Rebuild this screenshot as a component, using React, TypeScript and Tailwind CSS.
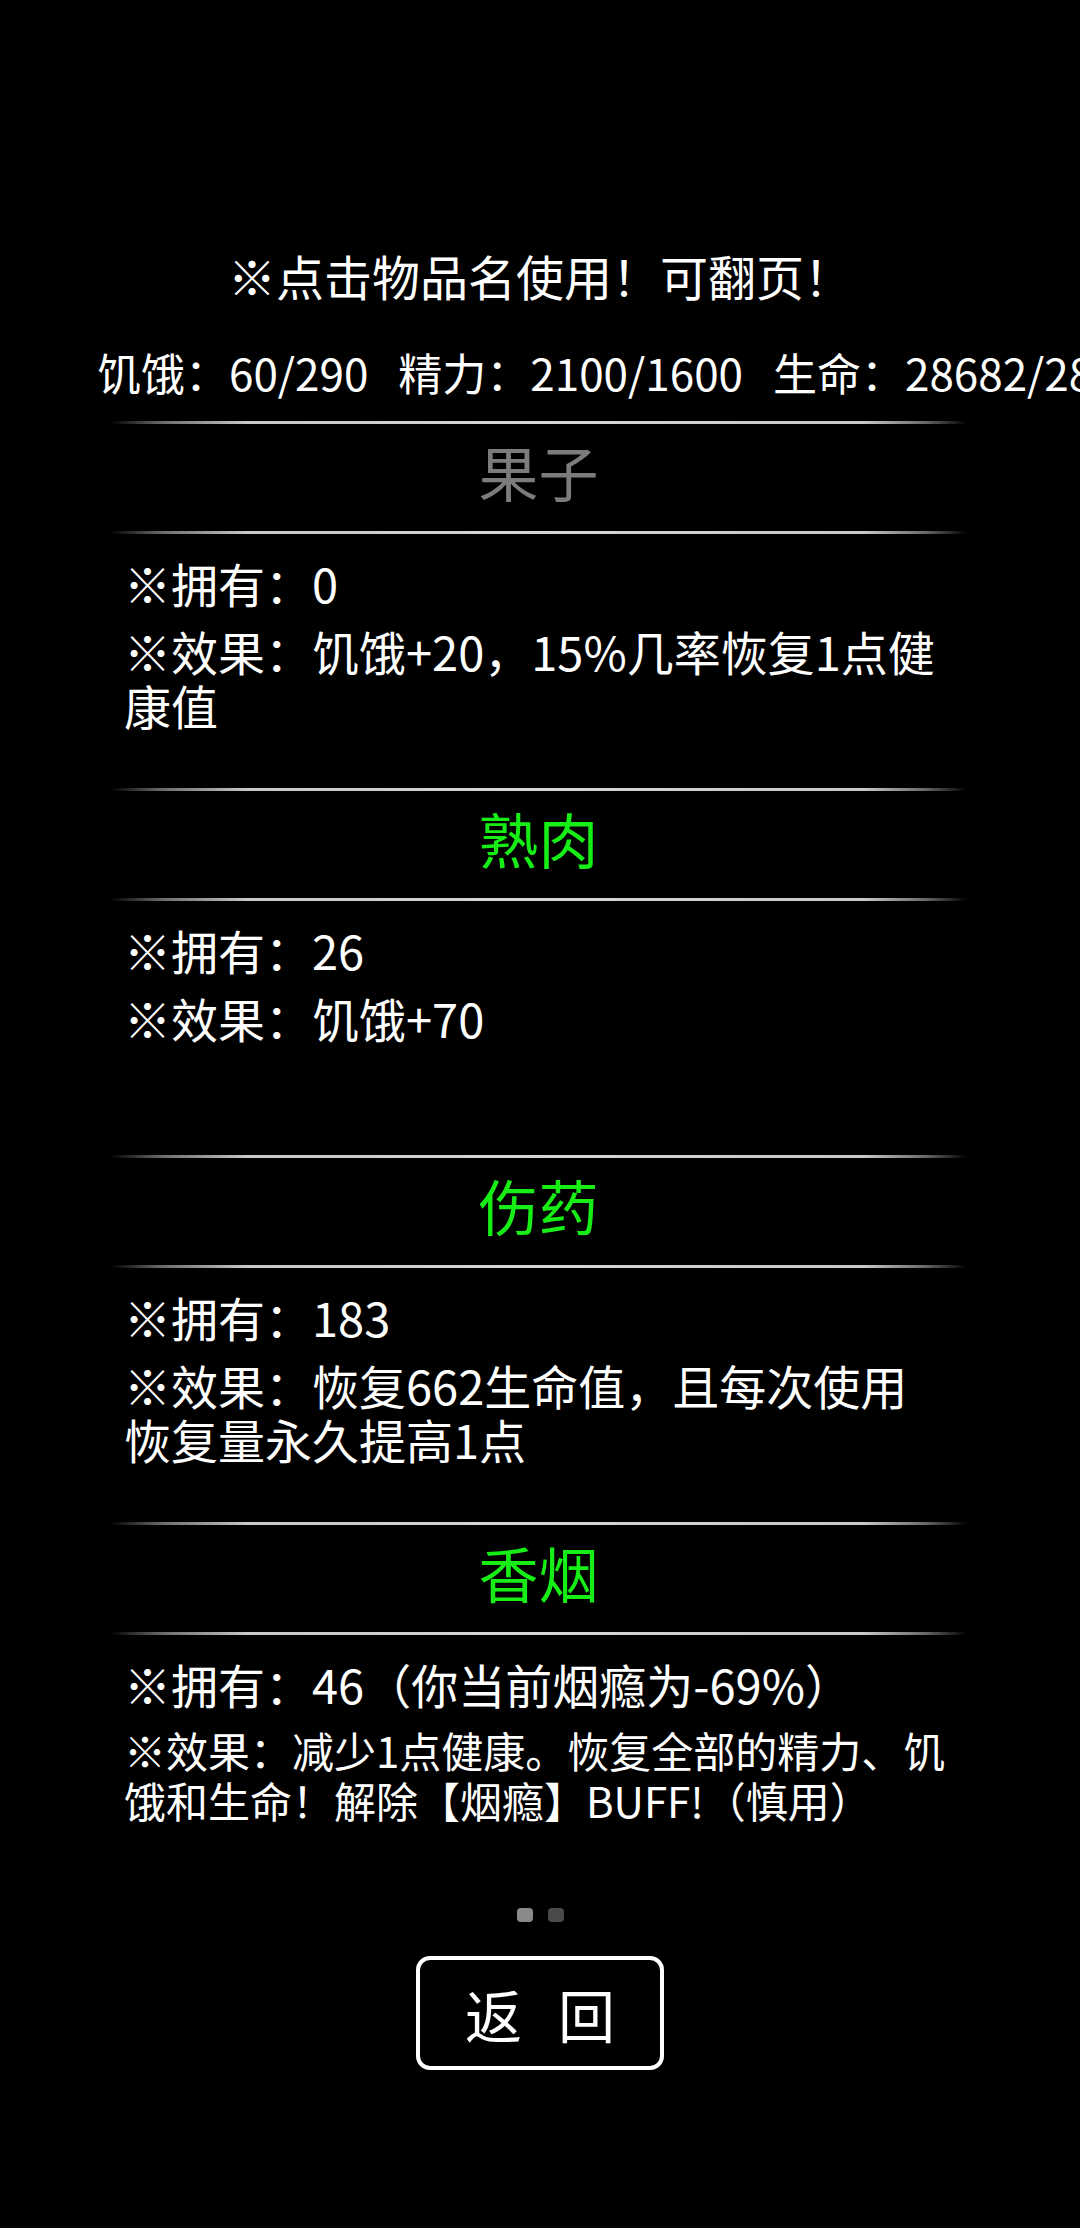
import React from 'react';

interface Item {
  name: string;
  owned: string;
  effect: string;
  usable: boolean;
  smallEffect?: boolean;
}

const items: Item[] = [
  { name: '果子', owned: '0', effect: '饥饿+20，15%几率恢复1点健康值', usable: false },
  { name: '熟肉', owned: '26', effect: '饥饿+70', usable: true },
  { name: '伤药', owned: '183', effect: '恢复662生命值，且每次使用恢复量永久提高1点', usable: true },
  {
    name: '香烟',
    owned: '46（你当前烟瘾为-69%）',
    effect: '减少1点健康。恢复全部的精力、饥饿和生命！解除【烟瘾】BUFF!（慎用）',
    usable: true,
    smallEffect: true,
  },
];

const stats = ['饥饿：60/290', '精力：2100/1600', '生命：28682/28682'];

const Divider = () => (
  <div className="h-[3px] w-full bg-[linear-gradient(to_right,transparent_0%,#6a6a6a_6%,#c8c8c8_16%,#d6d6d6_50%,#c8c8c8_88%,#6a6a6a_95%,transparent_100%)]" />
);

const ItemSection: React.FC<{ item: Item }> = ({ item }) => (
  <div className="flex flex-col">
    <Divider />
    <div
      className={`h-[107px] pb-[14px] flex items-center justify-center text-[60px] leading-none ${
        item.usable ? 'text-[#16ee16]' : 'text-[#7c7c7c]'
      }`}
    >
      {item.name}
    </div>
    <Divider />
    <div className="h-[254px] pt-[20px] pl-[14px] text-white">
      <div className="text-[47px] leading-[57px] whitespace-nowrap">※拥有：{item.owned}</div>
      {item.smallEffect ? (
        <div className="mt-[13px] w-[836px] text-[42px] leading-[50px]">※效果：{item.effect}</div>
      ) : (
        <div className="mt-[13px] w-[821px] text-[47px] leading-[54px]">※效果：{item.effect}</div>
      )}
    </div>
  </div>
);

export default function App() {
  return (
    <div
      className="w-[1080px] h-[2228px] bg-black overflow-hidden flex flex-col text-white"
      style={{ fontFamily: '"Noto Sans CJK SC", "Noto Sans", sans-serif' }}
    >
      <div className="pt-[246px] h-[304px] text-center text-[48px] leading-[58px]">※点击物品名使用！可翻页！</div>
      <div className="mt-[42px] h-[52px] pl-[97px] flex gap-[30px] text-[44px] leading-[52px] whitespace-nowrap">
        {stats.map((s) => (
          <span key={s}>{s}</span>
        ))}
      </div>
      <div className="mt-[23px] ml-[110px] w-[857px] flex flex-col">
        {items.map((it) => (
          <ItemSection key={it.name} item={it} />
        ))}
      </div>
      <div className="mt-[19px] flex justify-center gap-[15px]">
        <div className="w-[16px] h-[14px] rounded-[4px] bg-[#8a8a8a]" />
        <div className="w-[16px] h-[14px] rounded-[4px] bg-[#4a4a4a]" />
      </div>
      <div className="mt-[34px] flex justify-center">
        <div className="w-[248px] h-[114px] border-[4px] border-white rounded-[14px] flex items-center justify-center gap-[36px] text-[57px] leading-none">
          <span>返</span>
          <span>回</span>
        </div>
      </div>
    </div>
  );
}
